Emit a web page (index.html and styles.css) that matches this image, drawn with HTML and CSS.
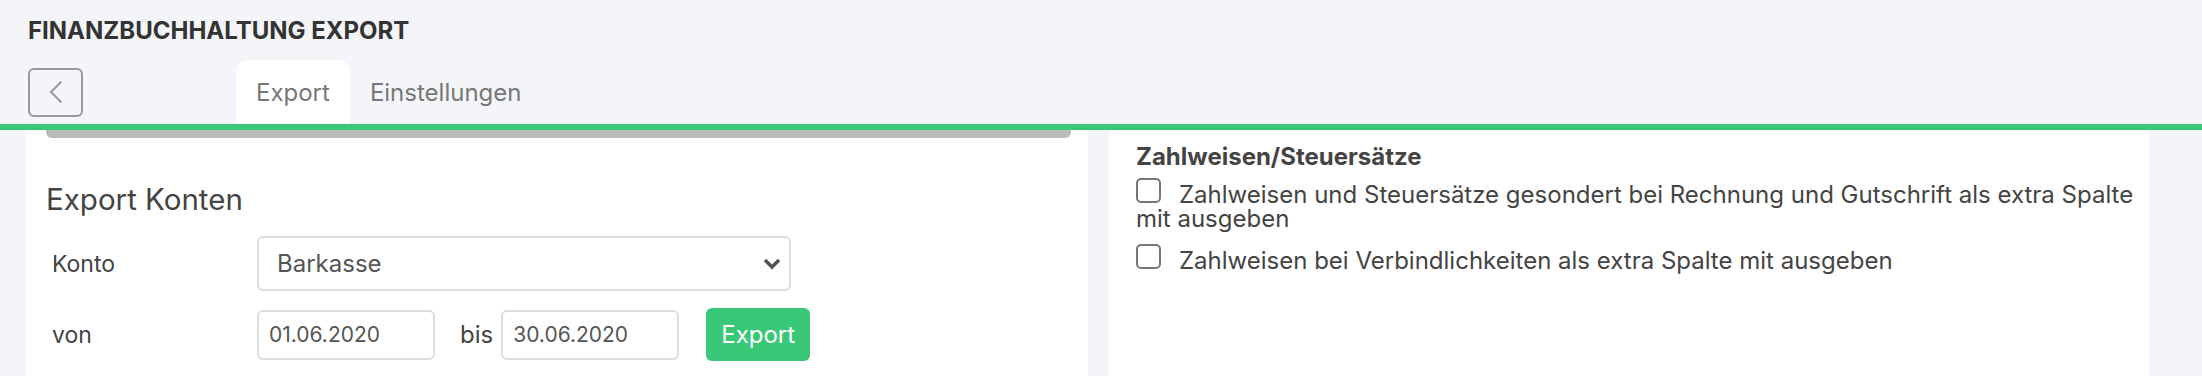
FILE: index.html
```html
<!DOCTYPE html>
<html lang="de">
<head>
<meta charset="utf-8">
<title>Finanzbuchhaltung Export</title>
<link rel="stylesheet" href="styles.css">
</head>
<body>
<header class="top">
  <h1 class="title">FINANZBUCHHALTUNG EXPORT</h1>
  <div class="tabbar">
    <button class="back" type="button" aria-label="Zurück">
      <svg width="14" height="24" viewBox="0 0 14 24"><path d="M12.5 1.5 L2 12 L12.5 22.5" fill="none" stroke="#999" stroke-width="2"/></svg>
    </button>
    <nav class="tabs">
      <a class="tab active">Export</a>
      <a class="tab">Einstellungen</a>
    </nav>
  </div>
</header>
<main class="content">
  <section class="panel panel-left">
    <div class="bar"></div>
    <h2 class="panel-title">Export Konten</h2>
    <div class="form-row">
      <span class="label">Konto</span>
      <div class="select">
        <span>Barkasse</span>
        <svg width="18" height="12" viewBox="0 0 18 12"><path d="M2 2 L9 9 L16 2" fill="none" stroke="#555" stroke-width="3.6"/></svg>
      </div>
    </div>
    <div class="form-row row-dates">
      <span class="label">von</span>
      <div class="input">01.06.2020</div>
      <span class="bis">bis</span>
      <div class="input">30.06.2020</div>
      <button class="btn" type="button">Export</button>
    </div>
  </section>
  <section class="panel panel-right">
    <h3 class="section-title">Zahlweisen/Steuersätze</h3>
    <label class="check"><span class="box"></span>Zahlweisen und Steuersätze gesondert bei Rechnung und Gutschrift als extra Spalte mit ausgeben</label>
    <label class="check"><span class="box"></span>Zahlweisen bei Verbindlichkeiten als extra Spalte mit ausgeben</label>
  </section>
</main>
</body>
</html>
```

FILE: styles.css
```css
* { box-sizing: border-box; }
html, body { margin: 0; padding: 0; }
body {
  background: #f4f5f9;
  font-family: Inter, "Liberation Sans", sans-serif;
  color: #444;
  min-height: 100vh;
  display: flex;
  flex-direction: column;
}
.top {
  padding-top: 16px;
}
.title {
  margin: 0 0 0 28px;
  font-size: 24px;
  line-height: 29px;
  font-weight: 700;
  color: #333;
}
.tabbar {
  margin-top: 15px;
  height: 70px;
  display: flex;
  align-items: center;
  border-bottom: 6px solid #38c878;
}
.back {
  margin-left: 28px;
  width: 55px;
  height: 49px;
  border: 2px solid #999;
  border-radius: 6px;
  background: transparent;
  display: flex;
  align-items: center;
  justify-content: center;
  padding: 0;
}
.tabs {
  margin-left: 153px;
  display: flex;
  align-self: stretch;
}
.tab {
  display: flex;
  align-items: center;
  padding: 0 20px;
  font-size: 24px;
  color: #777;
  border-radius: 12px 12px 0 0;
}
.tab.active { background: #fff; }
.content {
  flex: 1;
  display: grid;
  grid-template-columns: 1062fr 1040fr;
  column-gap: 21px;
  padding: 0 53px 0 26px;
}
.panel { background: #fff; }
.bar {
  height: 8px;
  margin: 0 17px 0 20px;
  background: #bbb;
  border-radius: 0 0 6px 6px;
}
.panel-title {
  margin: 44px 0 20px 20px;
  font-size: 29.5px;
  line-height: 34px;
  font-weight: 400;
  color: #444;
}
.form-row {
  display: flex;
  align-items: center;
  padding-left: 26px;
  font-size: 21px;
}
.row-dates { margin-top: 17px; }
.label {
  width: 205px;
  font-size: 23px;
  color: #444;
}
.select {
  width: 534px;
  height: 55px;
  border: 2px solid #ddd;
  border-radius: 6px;
  display: flex;
  align-items: center;
  justify-content: space-between;
  padding: 0 8px 0 18px;
  color: #555;
  font-size: 24px;
}
.input {
  width: 178px;
  height: 50px;
  border: 2px solid #ddd;
  border-radius: 6px;
  display: flex;
  align-items: center;
  padding-left: 10px;
  color: #555;
}
.bis {
  margin: 0 8px 0 25px;
  font-size: 24px;
  color: #444;
}
.btn {
  margin-left: 27px;
  width: 104px;
  height: 53px;
  border: 0;
  border-radius: 6px;
  background: #38c878;
  color: #fff;
  font-family: inherit;
  font-size: 24px;
  padding: 0;
}
.panel-right {
  padding: 12px 6px 0 27px;
}
.section-title {
  margin: 0 0 7px;
  font-size: 24px;
  line-height: 29px;
  font-weight: 700;
  color: #444;
}
.check {
  display: block;
  font-size: 24px;
  line-height: 24px;
  color: #444;
  margin-bottom: 13px;
}
.box {
  display: inline-block;
  width: 25px;
  height: 25px;
  border: 2px solid #777;
  border-radius: 5px;
  margin-right: 18px;
  background: #fff;
}
```
